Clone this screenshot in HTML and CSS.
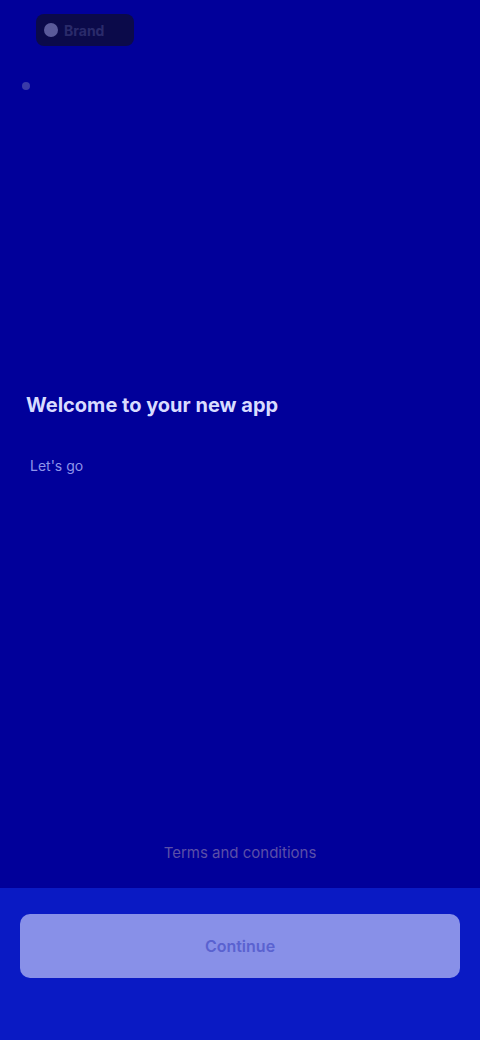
FILE: index.html
```html
<!DOCTYPE html>
<html lang="en">
<head>
    <meta charset="UTF-8">
    <meta name="viewport" content="width=device-width, initial-scale=1.0">
    <title>Welcome</title>
    <link rel="stylesheet" href="styles.css">
</head>
<body>
    <div class="screen">
        <div class="top">
            <div class="logo">
                <span class="logo-dot"></span>
                <span class="logo-text">Brand</span>
            </div>
            <div class="mini-icon">
                <svg width="12" height="12" viewBox="0 0 12 12"><circle cx="6" cy="6" r="4" fill="#3a3aa8"/></svg>
            </div>
        </div>

        <div class="intro">
            <h1>Welcome to your new app</h1>
            <p>Let's go</p>
        </div>

        <div class="footer">
            <a href="#" class="terms">Terms and conditions</a>
            <div class="action-bar">
                <button class="continue">Continue</button>
            </div>
        </div>
    </div>
</body>
</html>
```

FILE: styles.css
```css
body {
    font-family: "Inter", "Liberation Sans", sans-serif;
    margin: 0;
    padding: 0;
    background-color: #01009a;
    height: 100vh;
}
.screen {
    height: 1040px;
    display: flex;
    flex-direction: column;
    box-sizing: border-box;
}
.top {
    padding: 14px 18px 0;
}
.logo {
    display: flex;
    align-items: center;
    gap: 6px;
    width: 98px;
    height: 32px;
    margin-left: 18px;
    background: #0b0a4a;
    border-radius: 8px;
    padding: 0 8px;
    box-sizing: border-box;
}
.logo-dot {
    width: 14px;
    height: 14px;
    border-radius: 50%;
    background: #5a5a9a;
}
.logo-text {
    color: #2a2a6a;
    font-size: 14px;
    font-weight: 700;
}
.mini-icon {
    margin-top: 30px;
    margin-left: 2px;
    height: 14px;
}
.intro {
    padding: 0 26px;
    margin-top: 303px;
}
.intro h1 {
    margin: 0;
    color: #d8dcff;
    font-size: 20px;
    font-weight: 700;
}
.intro p {
    margin: 40px 0 0 4px;
    color: #8f94ea;
    font-size: 14px;
}
.footer {
    margin-top: auto;
    display: flex;
    flex-direction: column;
    align-items: center;
}
.terms {
    color: #5b4fa8;
    font-size: 15px;
    text-decoration: none;
    margin-bottom: 26px;
}
.action-bar {
    width: 100%;
    box-sizing: border-box;
    padding: 26px 20px 62px;
    background: #0a1ac4;
}
.continue {
    width: 100%;
    height: 64px;
    border: none;
    border-radius: 10px;
    background: #8890e8;
    color: #5a62d0;
    font-family: inherit;
    font-size: 16px;
    font-weight: 600;
}
```
